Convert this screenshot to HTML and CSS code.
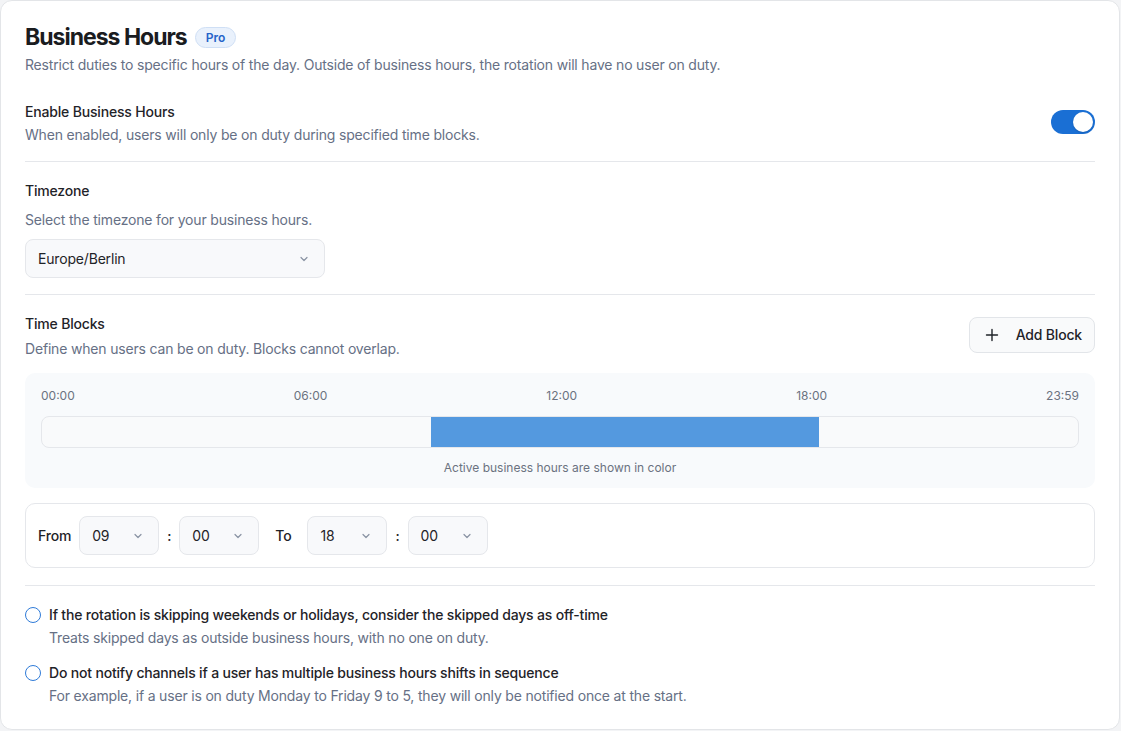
FILE: index.html
```html
<!DOCTYPE html>
<html lang="en">
<head>
  <title>Business Hours</title>
  <link rel="stylesheet" href="styles.css">
</head>
<body>
  <div class="card">
    <div class="header">
      <div class="title-row">
        <h1>Business Hours</h1>
        <span class="badge">Pro</span>
      </div>
      <p class="muted">Restrict duties to specific hours of the day. Outside of business hours, the rotation will have no user on duty.</p>
    </div>

    <div class="section enable">
      <div>
        <div class="label">Enable Business Hours</div>
        <p class="muted desc">When enabled, users will only be on duty during specified time blocks.</p>
      </div>
      <div class="toggle"><span class="knob"></span></div>
    </div>

    <div class="section">
      <div class="label">Timezone</div>
      <p class="muted tz-desc">Select the timezone for your business hours.</p>
      <div class="select tz-select">
        <span>Europe/Berlin</span>
        <svg class="chev" width="12" height="12" viewBox="0 0 12 12"><path d="M3 4.5l3 3 3-3" fill="none" stroke="currentColor" stroke-width="1.2" stroke-linecap="round" stroke-linejoin="round"/></svg>
      </div>
    </div>

    <div class="section blocks">
      <div class="blocks-head">
        <div>
          <div class="label">Time Blocks</div>
          <p class="muted desc">Define when users can be on duty. Blocks cannot overlap.</p>
        </div>
        <button class="add-btn">
          <svg width="14" height="14" viewBox="0 0 14 14"><path d="M7 1.5v11M1.5 7h11" stroke="currentColor" stroke-width="1.4" stroke-linecap="round"/></svg>
          Add Block
        </button>
      </div>

      <div class="timeline">
        <div class="ticks">
          <span>00:00</span><span>06:00</span><span>12:00</span><span>18:00</span><span>23:59</span>
        </div>
        <div class="track">
          <div class="range" style="left: 37.5%; width: 37.5%;"></div>
        </div>
        <div class="caption">Active business hours are shown in color</div>
      </div>

      <div class="range-row">
        <span class="row-label">From</span>
        <div class="select small"><span>09</span><svg class="chev" width="12" height="12" viewBox="0 0 12 12"><path d="M3 4.5l3 3 3-3" fill="none" stroke="currentColor" stroke-width="1.2" stroke-linecap="round" stroke-linejoin="round"/></svg></div>
        <span class="colon">:</span>
        <div class="select small"><span>00</span><svg class="chev" width="12" height="12" viewBox="0 0 12 12"><path d="M3 4.5l3 3 3-3" fill="none" stroke="currentColor" stroke-width="1.2" stroke-linecap="round" stroke-linejoin="round"/></svg></div>
        <span class="row-label to">To</span>
        <div class="select small"><span>18</span><svg class="chev" width="12" height="12" viewBox="0 0 12 12"><path d="M3 4.5l3 3 3-3" fill="none" stroke="currentColor" stroke-width="1.2" stroke-linecap="round" stroke-linejoin="round"/></svg></div>
        <span class="colon">:</span>
        <div class="select small"><span>00</span><svg class="chev" width="12" height="12" viewBox="0 0 12 12"><path d="M3 4.5l3 3 3-3" fill="none" stroke="currentColor" stroke-width="1.2" stroke-linecap="round" stroke-linejoin="round"/></svg></div>
      </div>
    </div>

    <div class="options">
      <label class="option">
        <span class="radio"></span>
        <span>
          <span class="label">If the rotation is skipping weekends or holidays, consider the skipped days as off-time</span>
          <span class="muted desc">Treats skipped days as outside business hours, with no one on duty.</span>
        </span>
      </label>
      <label class="option">
        <span class="radio"></span>
        <span>
          <span class="label">Do not notify channels if a user has multiple business hours shifts in sequence</span>
          <span class="muted desc">For example, if a user is on duty Monday to Friday 9 to 5, they will only be notified once at the start.</span>
        </span>
      </label>
    </div>
  </div>
</body>
</html>
```

FILE: styles.css
```css
* {
  box-sizing: border-box;
}

body {
  margin: 0;
  background: #f3f4f6;
  font-family: Inter, "Noto Sans", sans-serif;
  font-size: 14px;
  line-height: 20px;
  letter-spacing: -0.18px;
  color: #1f2328;
}

p {
  margin: 0;
}

.card {
  width: 1120px;
  height: 730px;
  background: #fff;
  border: 1px solid #e3e5e8;
  border-radius: 12px;
  padding: 20px 24px 22px;
}

.title-row {
  display: flex;
  align-items: center;
  gap: 8px;
}

h1 {
  margin: 0;
  font-size: 23px;
  line-height: 32px;
  font-weight: 700;
  letter-spacing: -1px;
  color: #1a1c1f;
}

.badge {
  font-size: 12px;
  line-height: 19px;
  font-weight: 600;
  letter-spacing: 0;
  color: #2563c9;
  background: #e9f1fc;
  border: 1px solid #cfdff5;
  border-radius: 999px;
  padding: 0 10px;
}

.muted {
  color: #667085;
}

.header .muted {
  margin-top: 2px;
}

.label {
  display: block;
  font-weight: 500;
  color: #1f2328;
}

.desc {
  display: block;
  margin-top: 3px;
}

.section {
  border-bottom: 1px solid #e5e7eb;
}

.enable {
  display: flex;
  justify-content: space-between;
  align-items: center;
  margin-top: 27px;
  padding-bottom: 16px;
}

.toggle {
  width: 44px;
  height: 24px;
  border-radius: 12px;
  background: #1a6fd4;
  display: flex;
  align-items: center;
  justify-content: flex-end;
  padding: 2px;
  margin-top: -3px;
}

.knob {
  width: 20px;
  height: 20px;
  border-radius: 50%;
  background: #fff;
  box-shadow: 0 1px 2px rgba(0, 0, 0, 0.15);
}

.section + .section {
  padding-top: 19px;
}

.tz-desc {
  margin-top: 9px;
}

.select {
  display: flex;
  align-items: center;
  justify-content: space-between;
  height: 39px;
  background: #f8f9fb;
  border: 1px solid #e5e7eb;
  border-radius: 8px;
  padding: 0 14px 0 12px;
  color: #1f2328;
}

.chev {
  color: #8a93a3;
}

.tz-select {
  width: 300px;
  margin: 9px 0 16px;
}

.blocks {
  padding-bottom: 17px;
}

.blocks-head {
  display: flex;
  justify-content: space-between;
  align-items: center;
}

.blocks-head .desc {
  margin-top: 5px;
}

.add-btn {
  display: flex;
  align-items: center;
  gap: 17px;
  height: 36px;
  padding: 0 12px 0 15px;
  font-family: inherit;
  font-size: 14px;
  font-weight: 500;
  letter-spacing: -0.18px;
  color: #1f2328;
  background: #f9fafb;
  border: 1px solid #e2e5e9;
  border-radius: 8px;
  margin-top: -4px;
}

.timeline {
  margin-top: 14px;
  background: #f8fafc;
  border-radius: 10px;
  padding: 15px 16px 12px;
}

.ticks {
  display: flex;
  justify-content: space-between;
  font-size: 12px;
  line-height: 16px;
  letter-spacing: 0;
  color: #6b7280;
}

.track {
  position: relative;
  margin-top: 12px;
  height: 32px;
  background: #f9fafb;
  border: 1px solid #e5e7eb;
  border-radius: 8px;
  overflow: hidden;
}

.range {
  position: absolute;
  top: 0;
  bottom: 0;
  background: #5499df;
}

.caption {
  margin-top: 12px;
  text-align: center;
  font-size: 12px;
  line-height: 16px;
  letter-spacing: 0;
  color: #6b7280;
}

.range-row {
  display: flex;
  align-items: center;
  gap: 8px;
  margin-top: 15px;
  padding: 12px;
  border: 1px solid #e5e7eb;
  border-radius: 10px;
}

.row-label {
  font-weight: 500;
}

.row-label.to {
  margin: 0 8px;
}

.select.small {
  width: 80px;
}

.colon {
  font-weight: 500;
}

.options {
  padding-top: 19px;
  display: flex;
  flex-direction: column;
  gap: 15px;
}

.option {
  display: flex;
  align-items: flex-start;
  gap: 8px;
}

.radio {
  flex: none;
  width: 16px;
  height: 16px;
  margin-top: 2px;
  border: 1.5px solid #2f7bd8;
  border-radius: 50%;
  background: #fff;
}
```
